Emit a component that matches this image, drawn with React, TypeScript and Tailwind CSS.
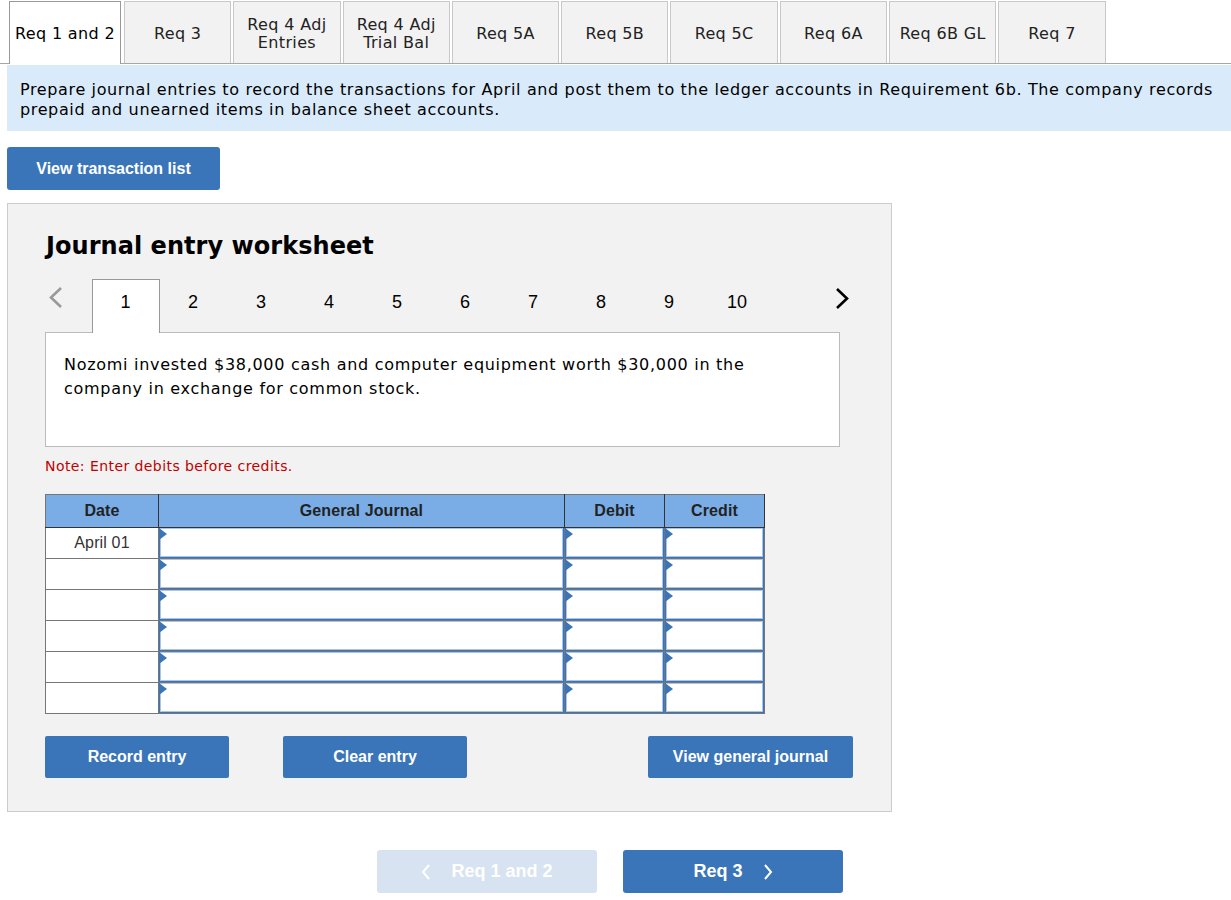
const verdana = "font-['DejaVu_Sans',Verdana,sans-serif]";
const arial = "font-['Liberation_Sans',Arial,sans-serif]";

const tabs = [
  ['Req 3'],
  ['Req 4 Adj', 'Entries'],
  ['Req 4 Adj', 'Trial Bal'],
  ['Req 5A'],
  ['Req 5B'],
  ['Req 5C'],
  ['Req 6A'],
  ['Req 6B GL'],
  ['Req 7'],
];

const steps = ['2', '3', '4', '5', '6', '7', '8', '9', '10'];
const rows = ['April 01', '', '', '', '', ''];

const Chevron = ({ left, className }: { left?: boolean; className: string }) => (
  <svg className={className} width="14" height="22" viewBox="0 0 14 22" fill="none">
    <path
      d={left ? 'M12 1 L2 10.5 L12 20' : 'M2 1 L12 10.5 L2 20'}
      stroke="currentColor"
      strokeWidth="2.6"
    />
  </svg>
);

const EntryCell = () => (
  <td className="relative h-[31px] border border-[#767676] p-0">
    <div className="absolute inset-0 border-x border-b border-[#3a75b9]">
      <div className="h-full border border-[#a9c6ea] bg-white"></div>
    </div>
    <svg className="absolute left-0 top-0" width="8" height="12" viewBox="0 0 8 12">
      <path d="M0 0 L8 6 L0 12 Z" fill="#3a75b9" />
    </svg>
  </td>
);

const ActionButton = ({ label, width }: { label: string; width: string }) => (
  <button
    className={`h-[42px] ${width} rounded-[2px] bg-[#3a75b9] text-[16px] font-bold text-white ${arial}`}
  >
    {label}
  </button>
);

export default function App() {
  return (
    <div className={`h-[900px] w-[1231px] overflow-hidden bg-white text-black ${verdana}`}>
      <nav className="flex h-[64px] items-start border-b border-[#a6a6a6] pl-[9px] pt-px">
        <div className="relative z-10 flex h-[63px] w-[112px] items-center justify-center border-x border-t border-[#999] bg-white pt-[2px] text-[16px] tracking-[0.35px] whitespace-nowrap">
          Req 1 and 2
        </div>
        <div className="ml-[3px] flex gap-[2px]">
          {tabs.map((lines) => (
            <div
              key={lines.join('-')}
              className="flex h-[62px] w-[107.3px] flex-col items-center justify-center border border-b-0 border-[#c8c8c8] bg-[#f2f2f2] pt-[2px] text-[16px] leading-[18px] tracking-[0.35px] text-[#222] whitespace-nowrap"
            >
              {lines.map((line) => (
                <span key={line}>{line}</span>
              ))}
            </div>
          ))}
        </div>
      </nav>

      <main className="mt-px pl-[7px]">
        <p className="h-[66px] bg-[#d9ebfa] pl-[13px] pr-2 pt-[15px] text-[16px] leading-[20px] tracking-[0.63px]">
          Prepare journal entries to record the transactions for April and post them to the ledger accounts in Requirement 6b. The company records prepaid and unearned items in balance sheet accounts.
        </p>

        <button
          className={`mt-4 h-[43px] w-[213px] rounded-[3px] bg-[#3a75b9] text-[16px] font-bold text-white ${arial}`}
        >
          View transaction list
        </button>

        <section className="mt-[13px] h-[609px] w-[885px] border border-[#cccccc] bg-[#f2f2f2] pl-[37px]">
          <h1 className="ml-px mt-[25px] text-[24px] font-bold leading-[34px] tracking-[0.05px]">Journal entry worksheet</h1>

          <div className={`relative mt-[16px] flex h-[53px] text-[18px] ${arial}`}>
            <Chevron left className="ml-[4px] mt-[8px] text-[#999]" />
            <div className="relative z-10 ml-[29px] flex h-[54px] w-[68px] items-start justify-center border-x border-t border-[#999] bg-white pr-px pt-[9px]">
              1
            </div>
            <div className="-ml-px flex">
              {steps.map((step) => (
                <div key={step} className="flex w-[68px] justify-center pt-[10px]">
                  {step}
                </div>
              ))}
            </div>
            <Chevron className="ml-[64px] mt-[9px]" />
          </div>

          <div className="h-[115px] w-[795px] border border-[#bbbbbb] bg-white pl-[18px] pr-8 pt-[20px] text-[16px] leading-[24px] tracking-[0.71px]">
            Nozomi invested $38,000 cash and computer equipment worth $30,000 in the company in exchange for common stock.
          </div>

          <p className="mt-[10px] text-[14px] leading-[18px] tracking-[0.43px] text-[#c00000]">Note: Enter debits before credits.</p>

          <table className={`mt-[19px] w-[720px] table-fixed border-collapse text-[16px] ${arial}`}>
            <thead>
              <tr className="h-[33px] bg-[#7aade6] text-[#222]">
                <th className="w-[113px] border border-[#333] border-l-[#767676] border-t-[#767676] font-semibold tracking-[0.1px]">Date</th>
                <th className="w-[406px] border border-[#333] border-t-[#767676] font-semibold tracking-[0.1px]">General Journal</th>
                <th className="w-[100px] border border-[#333] border-t-[#767676] font-semibold tracking-[0.1px]">Debit</th>
                <th className="w-[100px] border border-[#333] border-t-[#767676] font-semibold tracking-[0.1px]">Credit</th>
              </tr>
            </thead>
            <tbody>
              {rows.map((date, i) => (
                <tr key={i}>
                  <td className="h-[31px] border border-[#767676] bg-white p-0 text-center tracking-[0.15px] text-[#333]">{date}</td>
                  <EntryCell />
                  <EntryCell />
                  <EntryCell />
                </tr>
              ))}
            </tbody>
          </table>

          <div className="mt-[22px] flex">
            <ActionButton label="Record entry" width="w-[184px]" />
            <ActionButton label="Clear entry" width="ml-[54px] w-[184px]" />
            <ActionButton label="View general journal" width="ml-[181px] w-[205px]" />
          </div>
        </section>

        <div className={`ml-[370px] mt-[38px] flex gap-[26px] text-[18px] font-bold text-white ${arial}`}>
          <button className="flex h-[43px] w-[220px] items-center justify-center gap-5 rounded-[3px] bg-[#d7e3f1]">
            <svg width="10" height="16" viewBox="0 0 10 16" fill="none">
              <path d="M8 1 L2 8 L8 15" stroke="currentColor" strokeWidth="2" />
            </svg>
            Req 1 and 2
          </button>
          <button className="flex h-[43px] w-[220px] items-center justify-center gap-5 rounded-[3px] bg-[#3a75b9]">
            Req 3
            <svg width="10" height="16" viewBox="0 0 10 16" fill="none">
              <path d="M2 1 L8 8 L2 15" stroke="currentColor" strokeWidth="2" />
            </svg>
          </button>
        </div>
      </main>
    </div>
  );
}
